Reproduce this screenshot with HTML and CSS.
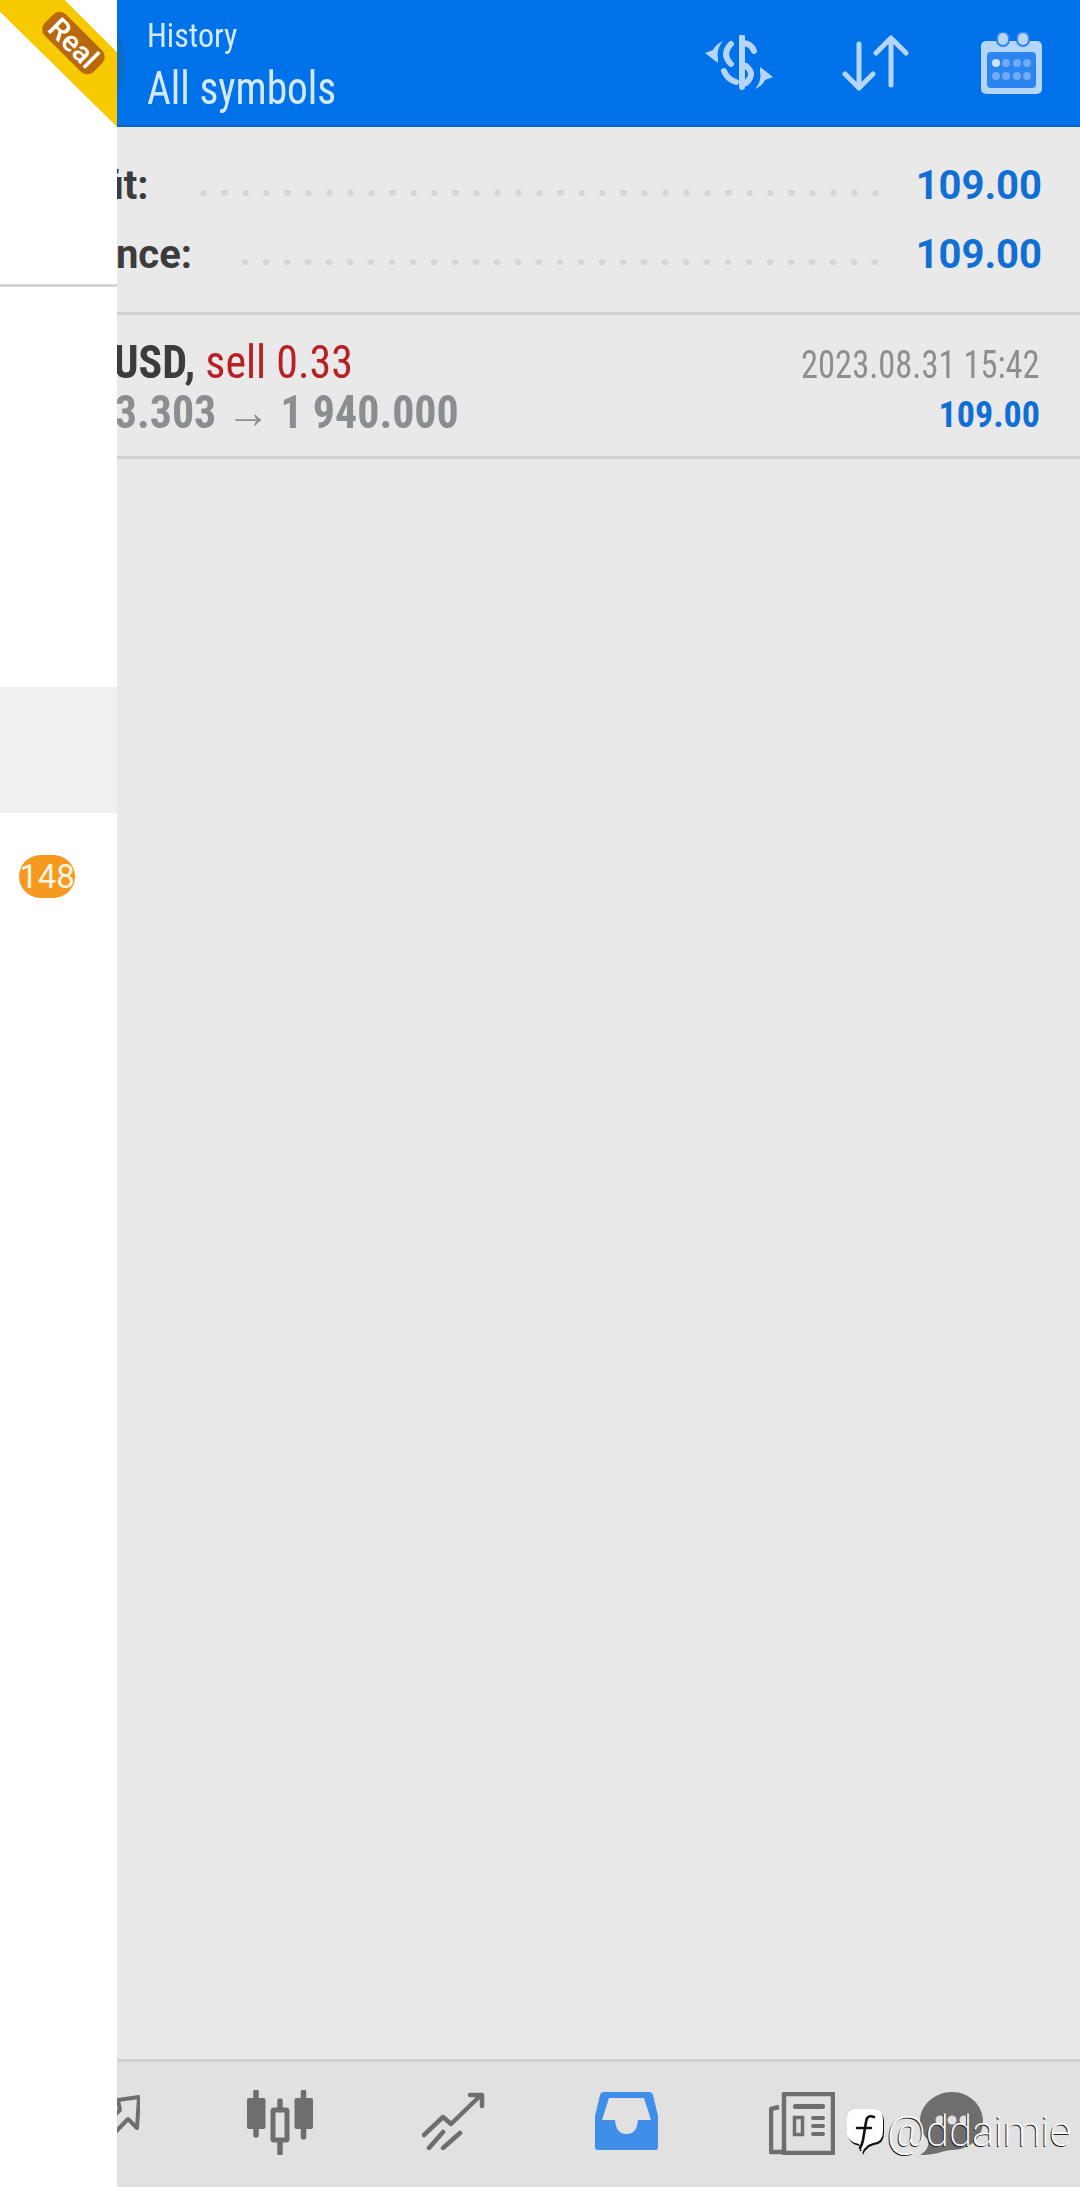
FILE: index.html
```html
<!DOCTYPE html>
<html lang="en">

<head>
    <meta charset="UTF-8">
    <meta name="viewport" content="width=device-width, initial-scale=1.0">
    <title>History</title>
    <link rel="stylesheet" href="styles.css">
</head>

<body>

    <!-- Header -->
    <header class="header">
        <div class="titles">
            <div class="title-small">History</div>
            <div class="title-big">All symbols</div>
        </div>
        <div class="header-icons">
            <svg class="icon-deals" viewBox="0 0 72 56">
                <path d="M38 2V52M38 8Q47 8 50 16M27 9Q17 19 27 29M20 36Q23 44 32 47M42 31Q52 39 42 48" fill="none" stroke="#b5d5fb" stroke-width="6" stroke-linecap="round"/>
                <path d="M19 6Q11 10 9 15L1 18L14 28L14 23Q12 14 19 6Z" fill="#b5d5fb"/>
                <path d="M19 6Q11 10 9 15L1 18L14 28L14 23Q12 14 19 6Z" fill="#b5d5fb" transform="rotate(180 35 30)"/>
            </svg>
            <svg class="icon-sort" viewBox="0 0 68 56">
                <path d="M18 9V53M4 39L18 53L32 39M50 50V3M35 18L50 3L65 18" fill="none" stroke="#b5d5fb" stroke-width="5" stroke-linecap="round" stroke-linejoin="round"/>
            </svg>
            <svg class="icon-calendar" viewBox="0 0 62 62">
                <rect x="0" y="9" width="61" height="53" rx="5" fill="#b5d5fb"/>
                <rect x="6" y="20" width="49" height="36" rx="4" fill="#2c85ee"/>
                <rect x="16" y="0" width="12" height="14" rx="6" fill="#b5d5fb" stroke="#2c85ee" stroke-width="2"/>
                <rect x="36" y="0" width="12" height="14" rx="6" fill="#b5d5fb" stroke="#2c85ee" stroke-width="2"/>
                <circle cx="15" cy="31" r="4" fill="#cfe3fc"/>
                <circle cx="25" cy="31" r="4" fill="#6fabf6"/>
                <circle cx="36" cy="31" r="4" fill="#6fabf6"/>
                <circle cx="46" cy="31" r="4" fill="#6fabf6"/>
                <circle cx="15" cy="44" r="4" fill="#6fabf6"/>
                <circle cx="25" cy="44" r="4" fill="#6fabf6"/>
                <circle cx="36" cy="44" r="4" fill="#6fabf6"/>
                <circle cx="46" cy="44" r="4" fill="#6fabf6"/>
            </svg>
        </div>
    </header>

    <!-- History list -->
    <main class="content">
        <section class="summary">
            <div class="summary-row">
                <span class="summary-label">Profit:</span>
                <span class="leader leader-profit"></span>
                <span class="summary-value">109.00</span>
            </div>
            <div class="summary-row">
                <span class="summary-label">Balance:</span>
                <span class="leader leader-balance"></span>
                <span class="summary-value">109.00</span>
            </div>
        </section>

        <section class="deal">
            <div class="deal-left">
                <div class="deal-title"><b>XAUUSD,</b> <span class="sell">sell 0.33</span></div>
                <div class="deal-prices">1 923.303 <span class="arrow">→</span> 1 940.000</div>
            </div>
            <div class="deal-right">
                <div class="deal-time">2023.08.31 15:42</div>
                <div class="deal-profit">109.00</div>
            </div>
        </section>
    </main>

    <!-- Bottom tabs -->
    <nav class="tabs">
        <div class="tab">
            <svg class="tab-icon" width="64" height="64" viewBox="0 0 64 64">
                <path d="M42 8L63 5L61 36L52 27L20 60L10 50L44 18Z" fill="none" stroke="#6e6e6e" stroke-width="4" stroke-linejoin="round"/>
            </svg>
        </div>
        <div class="tab">
            <svg class="tab-icon tab-icon-candles" width="66" height="65" viewBox="0 0 66 65">
                <path d="M9 2V45M56.500 2V47M33 11V63" fill="none" stroke="#6e6e6e" stroke-width="5.500" stroke-linecap="round"/>
                <rect x="0" y="8" width="18.500" height="31" rx="2" fill="#6e6e6e"/>
                <rect x="47.500" y="8" width="18.500" height="31" rx="2" fill="#6e6e6e"/>
                <rect x="26" y="20" width="14" height="30" rx="1" fill="#e1e1e1" stroke="#6e6e6e" stroke-width="5"/>
            </svg>
        </div>
        <div class="tab">
            <svg class="tab-icon" width="63" height="58" viewBox="0 0 63 58">
                <path d="M2 43L21 25L29 32L59 3M48 3H60V14M7 56L21 40M21 56L38 41" fill="none" stroke="#6e6e6e" stroke-width="4.500" stroke-linecap="round" stroke-linejoin="round"/>
            </svg>
        </div>
        <div class="tab">
            <svg class="tab-icon" width="63" height="58" viewBox="0 0 63 58">
                <path d="M9 0H54Q57 0 58 3L63 24V55Q63 58 60 58H3Q0 58 0 55V24L5 3Q6 0 9 0ZM14 6L7 28H20Q21 42 31.500 42Q42 42 43 28H56L49 6Z" fill="#3f8fe8" fill-rule="evenodd"/>
            </svg>
        </div>
        <div class="tab">
            <svg class="tab-icon tab-icon-news" width="66" height="63" viewBox="0 0 66 63">
                <path d="M10 15L2 17V60H15M15 61V2H64V61Z" fill="none" stroke="#6e6e6e" stroke-width="4.500" stroke-linejoin="round"/>
                <rect x="24" y="12" width="32" height="5" rx="2" fill="#6e6e6e"/>
                <rect x="25.500" y="25.500" width="8" height="17" fill="none" stroke="#6e6e6e" stroke-width="3.500"/>
                <rect x="42" y="24" width="14" height="4" rx="2" fill="#6e6e6e"/>
                <rect x="42" y="32" width="14" height="4" rx="2" fill="#6e6e6e"/>
                <rect x="42" y="40" width="14" height="4" rx="2" fill="#6e6e6e"/>
            </svg>
        </div>
        <div class="tab tab-last">
            <svg class="tab-icon" width="63" height="63" viewBox="0 0 63 63">
                <path d="M32 0C49 0 63 13 63 29C63 46 49 58 32 58C24 58 18 63 0 63C8 58 9 53 8 48C3 43 0 36 0 29C0 13 15 0 32 0Z" fill="#6e6e6e"/>
                <circle cx="20" cy="28" r="4.500" fill="#e1e1e1"/>
                <circle cx="32" cy="28" r="4.500" fill="#e1e1e1"/>
                <circle cx="44" cy="28" r="4.500" fill="#e1e1e1"/>
            </svg>
        </div>
    </nav>

    <!-- Side menu, slid over the page -->
    <div class="logo-peek"></div>
    <aside class="drawer">
        <svg class="ribbon" width="117" height="127" viewBox="0 0 117 127">
            <path d="M0 12L0 0H65L117 52V127Z" fill="#f7c900"/>
            <path d="M65 0L117 52V0Z" fill="#fff"/>
            <path d="M0 12L117 127H0Z" fill="#fff"/>
        </svg>
        <span class="ribbon-label">Real</span>
        <div class="drawer-line"></div>
        <div class="drawer-active"></div>
        <div class="badge">148</div>
    </aside>

    <!-- Watermark -->
    <div class="watermark">
        <svg class="watermark-logo" width="38" height="45" viewBox="0 0 38 45">
            <path d="M11 0H27Q37 0 37 11V22Q37 33 27 34L22 36Q18 39 16 44Q15 38 13 35Q1 33 1 22V11Q1 0 11 0Z" fill="#fff"/>
            <path d="M28 8Q21 5 20 13L17 31Q16 36 14 39M11 19H25" fill="none" stroke="#111" stroke-width="2.600" stroke-linecap="round"/>
        </svg>
        <span class="watermark-name">@ddaimie</span>
    </div>

</body>

</html>
```

FILE: styles.css
```css
* {
    box-sizing: border-box;
}

html,
body {
    height: 100%;
}

body {
    font-family: 'Roboto', 'Liberation Sans', sans-serif;
    font-stretch: 75%;
    background-color: #e9e9e9;
    margin: 0;
    display: flex;
    flex-direction: column;
    overflow: hidden;
    position: relative;
}

/* Header */
.header {
    height: 127px;
    flex: none;
    display: flex;
    justify-content: space-between;
    background-color: #0072e9;
    border-bottom: 2px solid #0a62c0;
    padding-left: 147px;
    color: #d5e9fd;
}

.title-small {
    font-size: 33px;
    line-height: 36px;
    margin-top: 18px;
    transform: scaleX(0.97);
    transform-origin: left;
}

.title-big {
    font-size: 46px;
    line-height: 52px;
    margin-top: 8px;
    transform: scaleX(0.9);
    transform-origin: left;
}

.header-icons {
    display: flex;
    align-items: flex-start;
    padding-right: 37px;
}

.icon-deals {
    width: 72px;
    height: 56px;
    margin-top: 35px;
    margin-right: 65px;
}

.icon-sort {
    width: 68px;
    height: 56px;
    margin-top: 35px;
    margin-right: 72px;
}

.icon-calendar {
    width: 62px;
    height: 62px;
    margin-top: 32px;
}

/* Summary */
.content {
    flex: 1;
}

.summary {
    padding: 24px 38px 0 37px;
    height: 188px;
    border-bottom: 3px solid #d0d0d0;
}

.summary-row {
    display: flex;
    align-items: center;
    height: 69px;
}

.summary-label {
    font-size: 40px;
    font-weight: 700;
    font-stretch: 100%;
    color: #3c3c3c;
}

.leader {
    flex: 1;
    height: 6px;
    margin-top: 14px;
    margin-right: 30px;
    background-image: radial-gradient(circle at center, #d6d6d6 3px, transparent 3.5px);
    background-size: 21px 6px;
    background-repeat: repeat-x;
    background-position: right center;
}

.leader-profit {
    margin-left: 46px;
}

.leader-balance {
    margin-left: 45px;
}

.summary-value {
    font-size: 40px;
    font-weight: 700;
    font-stretch: 100%;
    color: #0f6fd2;
}

/* Deal row */
.deal {
    display: flex;
    justify-content: space-between;
    height: 144px;
    padding: 22px 40px 0 38px;
    border-bottom: 3px solid #d0d0d0;
}

.deal-left {
    transform: scaleX(0.955);
    transform-origin: left;
}

.deal-title {
    font-size: 46px;
    line-height: 50px;
    color: #3c3c3c;
}

.sell {
    color: #b72025;
}

.deal-prices {
    font-size: 46px;
    line-height: 50px;
    font-weight: 700;
    color: #8c8d90;
}

.arrow {
    font-weight: 400;
}

.deal-right {
    padding-top: 3px;
    text-align: right;
}

.deal-time {
    font-size: 39px;
    line-height: 50px;
    color: #8e8e8e;
    transform: scaleX(0.885);
    transform-origin: right;
}

.deal-profit {
    font-size: 36px;
    line-height: 50px;
    font-weight: 700;
    color: #0f6fd2;
}

/* Tabs */
.tabs {
    height: 128px;
    flex: none;
    display: flex;
    padding-left: 21px;
    background-color: #e1e1e1;
    border-top: 3px solid #d0d0d0;
}

.tab {
    width: 173px;
    display: flex;
    justify-content: center;
    align-items: flex-start;
    padding-top: 30px;
}

.tab-last {
    width: 130px;
}

.tab-icon-candles {
    margin-top: -2px;
    margin-left: -2px;
}

.tab-icon-news {
    margin-left: 4px;
}

/* Drawer */
.drawer {
    position: absolute;
    left: 0;
    top: 0;
    bottom: 0;
    width: 117px;
    background-color: #fff;
}

.ribbon {
    display: block;
}

.ribbon-label {
    position: absolute;
    left: 39px;
    top: 28px;
    font-size: 29px;
    line-height: 30px;
    font-weight: 500;
    font-stretch: 100%;
    padding: 0 6px;
    color: #fff;
    background-color: #b8690f;
    border-radius: 9px;
    transform: rotate(45deg);
}

.drawer-line {
    height: 3px;
    margin-top: 157px;
    background-color: #d5d5d5;
}

.drawer-active {
    height: 126px;
    margin-top: 400px;
    background-color: #f0f0f0;
}

.badge {
    width: 56px;
    height: 43px;
    margin: 42px 0 0 19px;
    border-radius: 22px;
    background-color: #f7981f;
    color: #fff6e2;
    font-size: 33px;
    font-stretch: 100%;
    font-weight: 400;
    line-height: 43px;
    text-align: center;
}

.logo-peek {
    position: absolute;
    left: 100px;
    top: 30px;
    width: 25px;
    height: 66px;
    border-radius: 50%;
    background-color: #0a6cc8;
}

/* Watermark */
.watermark {
    position: absolute;
    left: 846px;
    top: 2107px;
    display: flex;
    align-items: center;
    gap: 3px;
}

.watermark-logo {
    filter: drop-shadow(1px 2px 0 #111);
}

.watermark-name {
    font-size: 42px;
    font-weight: 200;
    font-stretch: 100%;
    color: #fff;
    text-shadow: -1px 1px 0 #222;
}
```
